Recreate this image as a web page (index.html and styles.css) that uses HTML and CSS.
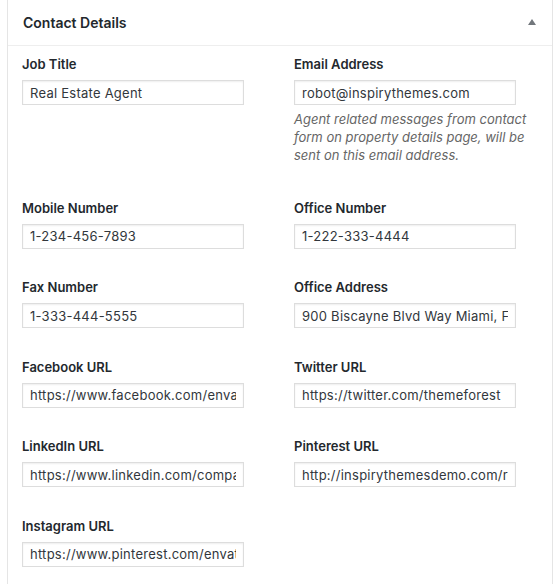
FILE: index.html
```html
<!DOCTYPE html>
<html>
<head>
<meta charset="utf-8">
<link rel="stylesheet" href="styles.css">
</head>
<body>
<div class="postbox">
  <div class="postbox-header">
    <h2 class="hndle">Contact Details</h2>
    <span class="toggle" aria-hidden="true"></span>
  </div>
  <div class="inside">
    <div class="field">
      <label class="field-label">Job Title</label>
      <input class="field-input" type="text" value="Real Estate Agent">
    </div>
    <div class="field">
      <label class="field-label">Email Address</label>
      <input class="field-input" type="text" value="robot@inspirythemes.com">
      <p class="field-desc">Agent related messages from contact form on property details page, will be sent on this email address.</p>
    </div>
    <div class="field">
      <label class="field-label">Mobile Number</label>
      <input class="field-input" type="text" value="1-234-456-7893">
    </div>
    <div class="field">
      <label class="field-label">Office Number</label>
      <input class="field-input" type="text" value="1-222-333-4444">
    </div>
    <div class="field">
      <label class="field-label">Fax Number</label>
      <input class="field-input" type="text" value="1-333-444-5555">
    </div>
    <div class="field">
      <label class="field-label">Office Address</label>
      <input class="field-input" type="text" value="900 Biscayne Blvd Way Miami, FL 33132">
    </div>
    <div class="field">
      <label class="field-label">Facebook URL</label>
      <input class="field-input" type="text" value="https://www.facebook.com/envato">
    </div>
    <div class="field">
      <label class="field-label">Twitter URL</label>
      <input class="field-input" type="text" value="https://twitter.com/themeforest">
    </div>
    <div class="field">
      <label class="field-label">LinkedIn URL</label>
      <input class="field-input" type="text" value="https://www.linkedin.com/company/envato">
    </div>
    <div class="field">
      <label class="field-label">Pinterest URL</label>
      <input class="field-input" type="text" value="http://inspirythemesdemo.com/realhomes">
    </div>
    <div class="field">
      <label class="field-label">Instagram URL</label>
      <input class="field-input" type="text" value="https://www.pinterest.com/envato">
    </div>
  </div>
</div>
</body>
</html>
```

FILE: styles.css
```css
html, body {
  margin: 0;
  padding: 0;
  background: #fff;
}
body {
  font-family: "Inter", "Roboto", "Liberation Sans", sans-serif;
  color: #23282d;
}
.postbox {
  margin-left: 7px;
  width: 546px;
  box-sizing: border-box;
  border-left: 1px solid #e5e5e5;
  border-right: 1px solid #e5e5e5;
  min-height: 584px;
}
.postbox-header {
  display: flex;
  align-items: center;
  justify-content: space-between;
  height: 45px;
  border-bottom: 1px solid #eeeeee;
  padding: 0 16px 0 15px;
}
.hndle {
  margin: 0;
  font-size: 14px;
  font-weight: 600;
  color: #23282d;
}
.toggle {
  width: 0;
  height: 0;
  border-left: 4px solid transparent;
  border-right: 4px solid transparent;
  border-bottom: 6px solid #72777c;
  margin-top: -2px;
}
.inside {
  display: grid;
  grid-template-columns: 272px 1fr;
  padding: 9px 0 0 14px;
}
.field {
  display: flex;
  flex-direction: column;
  align-items: flex-start;
  padding-bottom: 29.5px;
}
.field-label {
  font-size: 13px;
  font-weight: 600;
  line-height: 18px;
  margin-bottom: 7px;
}
.field-input {
  box-sizing: border-box;
  width: 222px;
  height: 25px;
  margin: 0;
  padding: 0 7px;
  border: 1px solid #dddddd;
  box-shadow: inset 0 1px 2px rgba(0,0,0,0.07);
  font-family: inherit;
  font-size: 13px;
  letter-spacing: 0.25px;
  color: #32373c;
  background: #fff;
  outline: none;
}
.field-desc {
  margin: 5px 0 5px;
  font-size: 13px;
  line-height: 18px;
  font-style: italic;
  color: #666;
  width: 236px;
}
```
